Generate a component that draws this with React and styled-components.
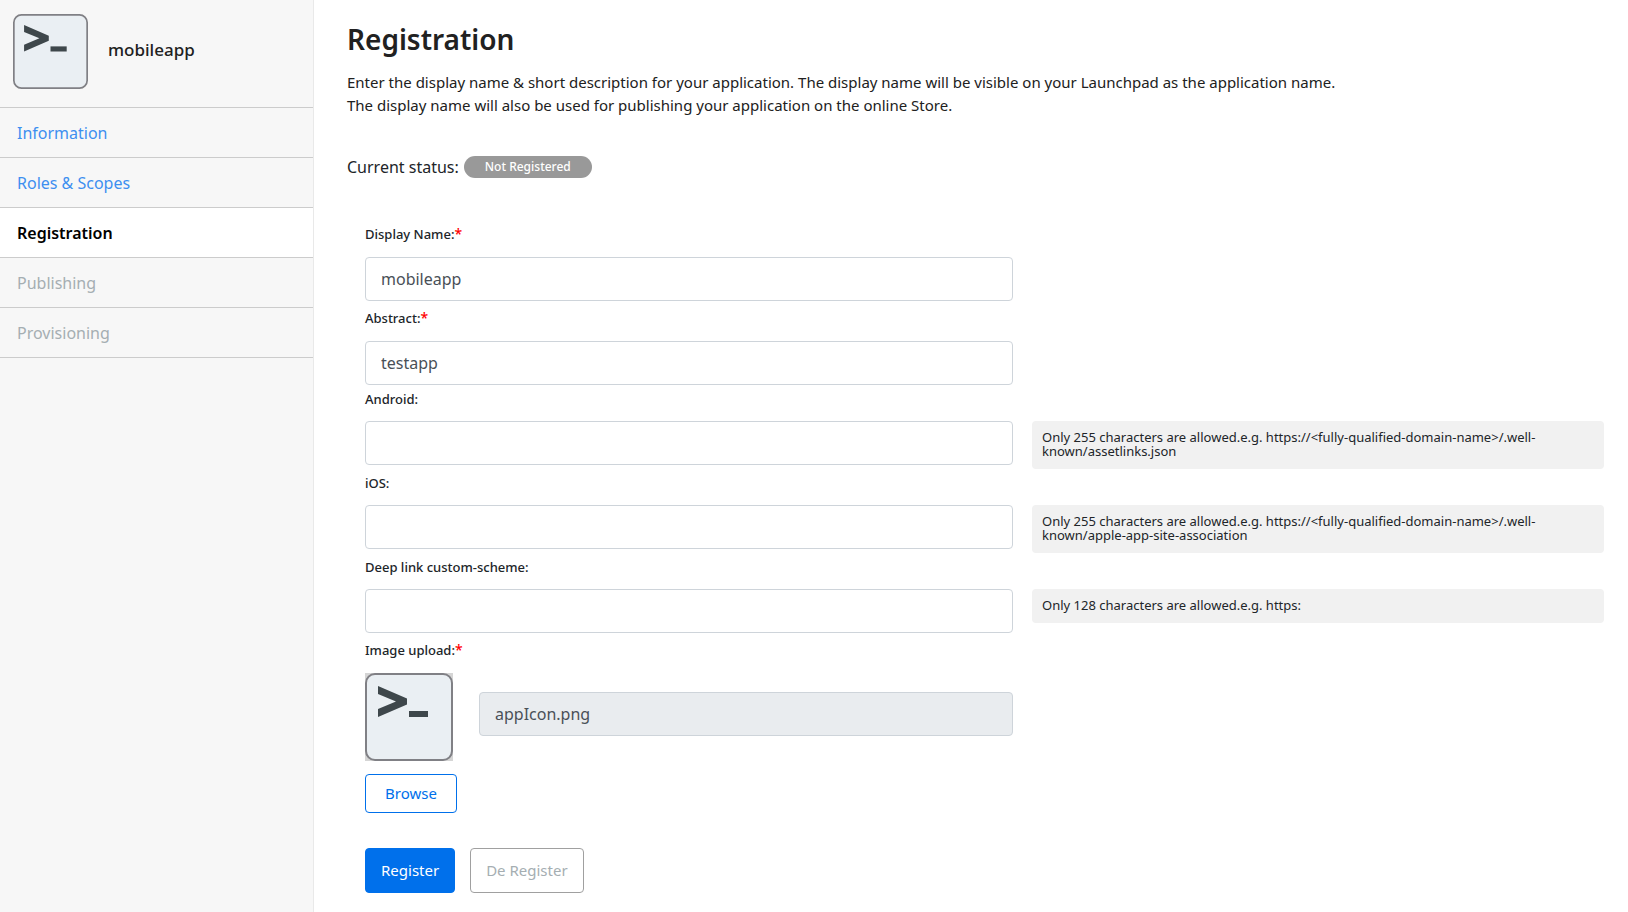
import React from "react";
import styled, { createGlobalStyle } from "styled-components";

const GlobalStyle = createGlobalStyle`
  *, *::before, *::after { box-sizing: border-box; }
  body {
    margin: 0;
    background: #fff;
    color: #212529;
    font-family: "Noto Sans", "Open Sans", sans-serif;
    font-size: 15px;
  }
  h1, p { margin: 0; }
  input, button { font: inherit; }
`;

const Page = styled.div`
  display: flex;
  min-height: 100vh;
`;

const Sidebar = styled.aside`
  flex: 0 0 314px;
  background: #f7f7f7;
  border-right: 1px solid #e9e9e9;
`;

const AppHeader = styled.div`
  display: flex;
  align-items: center;
  gap: 20px;
  padding: 14px 13px 18px;
  border-bottom: 1px solid #ccc;
`;

const AppName = styled.span`
  padding-bottom: 4px;
  font-size: 17px;
  font-weight: 500;
  line-height: 24px;
  color: #212121;
`;

const NavLink = styled.a`
  display: block;
  height: 50px;
  padding: 0 17px;
  border-bottom: 1px solid #ccc;
  background: ${(p) => (p.$active ? "#fff" : "transparent")};
  color: ${(p) => (p.$active ? "#000" : p.$disabled ? "#a5aeb2" : "#3d8ff0")};
  font-size: 16px;
  font-weight: ${(p) => (p.$active ? 600 : 400)};
  line-height: 51px;
  text-decoration: none;
`;

const Main = styled.main`
  flex: 1;
  min-width: 0;
  padding: 19px 24px 18px 33px;
`;

const Title = styled.h1`
  font-size: 28px;
  font-weight: 600;
  line-height: 40px;
  color: #212121;
`;

const Intro = styled.p`
  margin-top: 12px;
  font-size: 15px;
  line-height: 23px;
  color: #212121;
`;

const Status = styled.div`
  display: flex;
  align-items: center;
  gap: 5px;
  margin-top: 38px;
  font-size: 16px;
  line-height: 24px;
`;

const Badge = styled.span`
  padding: 0 21px;
  border-radius: 11px;
  background: #999;
  color: #fff;
  font-size: 12px;
  font-weight: 500;
  line-height: 22px;
`;

const Form = styled.form`
  padding: 38px 0 0 18px;
`;

const Row = styled.div`
  display: grid;
  grid-template-columns: 648fr 572fr;
  column-gap: 19px;
  align-items: start;
`;

const Label = styled.label`
  grid-column: 1 / -1;
  justify-self: start;
  height: ${(p) => (p.$required ? 40 : 36)}px;
  padding-top: ${(p) => (p.$required ? 7 : 4)}px;
  font-size: 13px;
  font-weight: 500;
  line-height: 20px;
`;

const Required = styled.span`
  color: #f00;
  font-size: 14px;
`;

const Input = styled.input`
  width: 100%;
  height: 44px;
  padding: 0 15px;
  border: 1px solid #ced4da;
  border-radius: 4px;
  background: ${(p) => (p.readOnly ? "#e9ecef" : "#fff")};
  color: #495057;
  font-size: 16px;
  outline: none;
`;

const FileName = styled(Input)`
  margin-bottom: 6px;
`;

const Hint = styled.p`
  padding: 9px 10px 11px;
  border-radius: 4px;
  background: #f1f1f1;
  font-size: 13px;
  line-height: 14px;
`;

const Upload = styled.div`
  display: flex;
  align-items: center;
  gap: 26px;
`;

const Icon = styled.svg`
  flex: none;
`;

const Button = styled.button`
  height: ${(p) => (p.$small ? 39 : 45)}px;
  padding: 0 ${(p) => (p.$small ? 19 : 15)}px 2px;
  border: 1px solid ${(p) => (p.disabled ? "#a0a0a0" : "#0070eb")};
  border-radius: 4px;
  background: ${(p) => (p.$primary ? "#0070eb" : "#fff")};
  color: ${(p) => (p.$primary ? "#fff" : p.disabled ? "#a5aeb2" : "#0070eb")};
  font-size: 15px;
`;

const BrowseRow = styled.div`
  margin-top: 13px;
`;

const Actions = styled.div`
  display: flex;
  gap: 15px;
  margin-top: 35px;
`;

function TerminalIcon({ size, framed }) {
  return (
    <Icon width={size} height={size} viewBox="0 0 88 88" aria-hidden="true">
      {framed && <rect width="88" height="88" fill="#d5d5d5" />}
      <rect x="1" y="1" width="86" height="86" rx="9" fill="#eaeff3" stroke="#808085" strokeWidth="2" />
      <path d="M13 13 L42 25.5 V31.5 L13 44 V36 L31 28.5 L13 21 Z" fill="#3e474b" />
      <rect x="44" y="38" width="19" height="6" fill="#3e474b" />
    </Icon>
  );
}

const navItems = [
  { text: "Information" },
  { text: "Roles & Scopes" },
  { text: "Registration", active: true },
  { text: "Publishing", disabled: true },
  { text: "Provisioning", disabled: true },
];

const fields = [
  { id: "name", label: "Display Name:", required: true, value: "mobileapp" },
  { id: "abstract", label: "Abstract:", required: true, value: "testapp" },
  {
    id: "android",
    label: "Android:",
    hint: "Only 255 characters are allowed.e.g. https://<fully-qualified-domain-name>/.well-known/assetlinks.json",
  },
  {
    id: "ios",
    label: "iOS:",
    hint: "Only 255 characters are allowed.e.g. https://<fully-qualified-domain-name>/.well-known/apple-app-site-association",
  },
  { id: "scheme", label: "Deep link custom-scheme:", hint: "Only 128 characters are allowed.e.g. https:" },
];

export default function App() {
  return (
    <>
      <GlobalStyle />
      <Page>
        <Sidebar>
          <AppHeader>
            <TerminalIcon size={75} />
            <AppName>mobileapp</AppName>
          </AppHeader>
          <nav>
            {navItems.map((n) => (
              <NavLink key={n.text} href="#" $active={n.active} $disabled={n.disabled} aria-disabled={n.disabled}>
                {n.text}
              </NavLink>
            ))}
          </nav>
        </Sidebar>
        <Main>
          <Title>Registration</Title>
          <Intro>
            Enter the display name &amp; short description for your application. The display name will be visible on
            your Launchpad as the application name.
            <br />
            The display name will also be used for publishing your application on the online Store.
          </Intro>
          <Status>
            Current status: <Badge>Not Registered</Badge>
          </Status>
          <Form onSubmit={(e) => e.preventDefault()}>
            {fields.map((f) => (
              <Row key={f.id}>
                <Label htmlFor={f.id} $required={f.required}>
                  {f.label}
                  {f.required && <Required>*</Required>}
                </Label>
                <Input id={f.id} type="text" defaultValue={f.value} />
                {f.hint && <Hint>{f.hint}</Hint>}
              </Row>
            ))}
            <Row>
              <Label htmlFor="image" $required>
                Image upload:<Required>*</Required>
              </Label>
              <Upload>
                <TerminalIcon size={88} framed />
                <FileName id="image" type="text" defaultValue="appIcon.png" readOnly />
              </Upload>
            </Row>
            <BrowseRow>
              <Button type="button" $small>Browse</Button>
            </BrowseRow>
            <Actions>
              <Button type="submit" $primary>Register</Button>
              <Button type="button" disabled>De Register</Button>
            </Actions>
          </Form>
        </Main>
      </Page>
    </>
  );
}
